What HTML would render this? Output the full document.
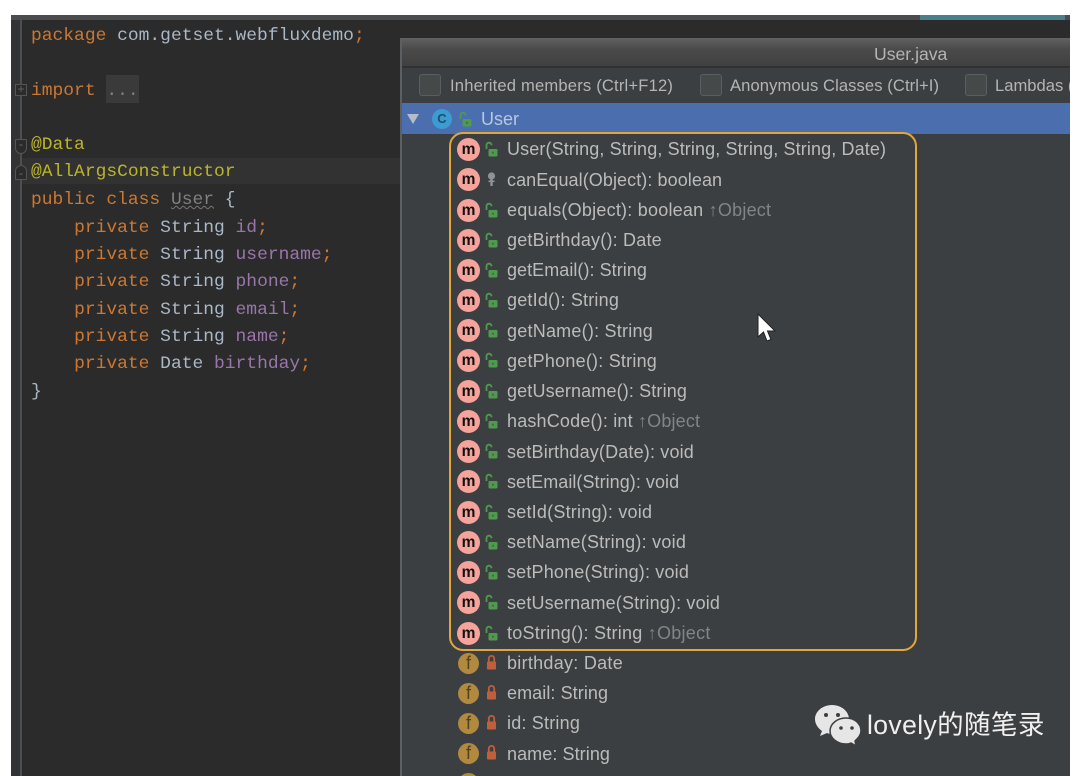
<!DOCTYPE html>
<html><head><meta charset="utf-8">
<style>
html,body{margin:0;padding:0;width:1080px;height:776px;overflow:hidden;background:#fff}
body{position:relative;font-family:"Liberation Sans","Noto Sans CJK SC",sans-serif}
#w{position:absolute;left:0;top:0;width:1080px;height:776px;overflow:hidden;filter:blur(.35px)}
.a{position:absolute}
#ed{left:11px;top:15px;width:1059px;height:761px;background:#2b2b2b}
.c{position:absolute;left:31px;font:17.95px/27px "Liberation Mono",monospace;color:#a9b7c6;white-space:pre;height:27px}
.k{color:#cc7832}.v{color:#9876aa}.n{color:#bbb529}.g{color:#808080}
.r{position:absolute;left:507px;height:30px;line-height:30px;font-size:18px;color:#bbbbbb;white-space:pre}
.r i{font-style:normal;color:#808588}
.m{position:absolute;left:457px;width:23px;height:23px;border-radius:50%;background:#f5a39b;color:#111;font:bold 15.5px/24px "Liberation Sans",sans-serif;text-align:center}
.f{position:absolute;left:458px;width:21px;height:21px;border-radius:50%;background:#b1893f;color:#55421d;font:18px/21px "Liberation Sans",sans-serif;text-align:center}
.l{position:absolute;left:484px;width:15px;height:17px}
.cb{position:absolute;top:74px;width:20px;height:20px;border:1.5px solid #5a5e60;border-radius:3px;background:#45494a}
.t{position:absolute;top:74px;height:24px;line-height:24px;font-size:16.6px;color:#b4b4b4;white-space:pre}
</style></head><body>
<svg width="0" height="0" style="position:absolute">
<symbol id="o" viewBox="0 0 15 17"><path d="M2.5 8V4.2A2.5 2.5 0 0 1 7.5 4.2" fill="none" stroke="#4f9a4f" stroke-width="1.8"/><rect x="4.5" y="8" width="9" height="7.5" rx="1.2" fill="#4f9a4f"/><rect x="8" y="10.8" width="2" height="1.8" fill="#3c6f40"/></symbol>
<symbol id="p" viewBox="0 0 15 17"><path d="M4.8 8V4.6a2.7 2.7 0 0 1 5.4 0V8" fill="none" stroke="#c0603a" stroke-width="1.8"/><rect x="3" y="7.5" width="9" height="8" rx="1" fill="#c0603a"/></symbol>
<symbol id="y" viewBox="0 0 15 17"><circle cx="7.5" cy="5" r="3.6" fill="#8f9396"/><rect x="6.3" y="6" width="2.4" height="9" fill="#8f9396"/><rect x="4.5" y="9.5" width="6" height="1.6" fill="#8f9396"/></symbol>
</svg>
<div id="w">
<div class="a" id="ed"></div>
<div class="a" style="left:11px;top:20px;width:9px;height:756px;background:#313335"></div>
<div class="a" style="left:11px;top:15px;width:1059px;height:5px;background:#4a4c4e"></div>
<div class="a" style="left:920px;top:15px;width:145px;height:5px;background:#4b7f8a"></div>
<div class="a" style="left:20px;top:20px;width:2px;height:756px;background:#4c4e50"></div>
<div class="a" style="left:22px;top:158px;width:379px;height:26px;background:#323232"></div>

<div class="a" style="left:15px;top:84px;width:12px;height:12px;border:1px solid #555;box-sizing:border-box;color:#666;background:#2b2b2b;font:12px/10px 'Liberation Mono',monospace;text-align:center">+</div>
<div class="a" style="left:15px;top:139px;width:12px;height:15px;border:1px solid #555;border-radius:1px 1px 6px 6px;box-sizing:border-box;background:#2b2b2b;color:#666;font:12px/10px 'Liberation Mono',monospace;text-align:center">-</div>
<div class="a" style="left:15px;top:165px;width:12px;height:15px;border:1px solid #555;border-radius:6px 6px 1px 1px;box-sizing:border-box;background:#2b2b2b;color:#666;font:12px/16px 'Liberation Mono',monospace;text-align:center">-</div>

<div class="c" style="top:23px"><span class="k">package</span> com.getset.webfluxdemo<span class="k">;</span></div>
<div class="a" style="left:106px;top:75px;width:33px;height:28px;background:#3a3a3a"></div>
<div class="c" style="top:78px"><span class="k">import</span> <span class="g">...</span></div>
<div class="c" style="top:132px"><span class="n">@Data</span></div>
<div class="c" style="top:159px"><span class="n">@AllArgsConstructor</span></div>
<div class="c" style="top:187px"><span class="k">public class</span> <span class="g" style="text-decoration:underline wavy #777 1px">User</span> {</div>
<div class="c" style="top:215px">    <span class="k">private</span> String <span class="v">id</span><span class="k">;</span></div>
<div class="c" style="top:242px">    <span class="k">private</span> String <span class="v">username</span><span class="k">;</span></div>
<div class="c" style="top:269px">    <span class="k">private</span> String <span class="v">phone</span><span class="k">;</span></div>
<div class="c" style="top:297px">    <span class="k">private</span> String <span class="v">email</span><span class="k">;</span></div>
<div class="c" style="top:324px">    <span class="k">private</span> String <span class="v">name</span><span class="k">;</span></div>
<div class="c" style="top:351px">    <span class="k">private</span> Date <span class="v">birthday</span><span class="k">;</span></div>
<div class="c" style="top:379px">}</div>

<div class="a" style="left:400px;top:38px;width:670px;height:738px;background:#3c3f41;border-left:2px solid #5c6063;box-sizing:border-box"></div>
<div class="a" style="left:402px;top:38px;width:668px;height:28px;background:linear-gradient(#626262,#4a4a4a 40%,#404040)"></div>
<div class="a" style="left:402px;top:66px;width:668px;height:2px;background:#2f3133"></div>
<div class="a" style="left:874px;top:42px;height:24px;line-height:24px;font-size:17.6px;color:#b4b4b4">User.java</div>

<div class="cb" style="left:419px"></div><div class="t" style="left:450px;letter-spacing:.18px">Inherited members (Ctrl+F12)</div>
<div class="cb" style="left:700px"></div><div class="t" style="left:730px;letter-spacing:.08px">Anonymous Classes (Ctrl+I)</div>
<div class="cb" style="left:965px"></div><div class="t" style="left:995px;width:75px;overflow:hidden">Lambdas (</div>

<div class="a" style="left:402px;top:103px;width:668px;height:31px;background:#4b6eaf"></div>
<svg class="a" style="left:406px;top:113px" width="14" height="12"><path d="M1 1H13L7 11Z" fill="#b5bcc6"/></svg>
<div class="a" style="left:432px;top:109px;width:20px;height:20px;border-radius:50%;background:#3c9bd0;color:#1c4f70;font:bold 13px/20px 'Liberation Sans',sans-serif;text-align:center">C</div>
<svg class="a" style="left:458px;top:111px" width="15" height="17"><use href="#o"/></svg>
<div class="r" style="top:104px;left:481px;color:#b9c6e0">User</div>

<div class="m" style="top:138px">m</div><svg class="l" style="top:141px"><use href="#o"/></svg><div class="r" style="top:134px;letter-spacing:.12px">User(String, String, String, String, String, Date)</div>
<div class="m" style="top:168px">m</div><svg class="l" style="top:171px"><use href="#y"/></svg><div class="r" style="top:165px;letter-spacing:.08px">canEqual(Object): boolean</div>
<div class="m" style="top:199px">m</div><svg class="l" style="top:202px"><use href="#o"/></svg><div class="r" style="top:195px;letter-spacing:.23px">equals(Object): boolean <i>↑Object</i></div>
<div class="m" style="top:229px">m</div><svg class="l" style="top:232px"><use href="#o"/></svg><div class="r" style="top:225px;letter-spacing:.2px">getBirthday(): Date</div>
<div class="m" style="top:259px">m</div><svg class="l" style="top:262px"><use href="#o"/></svg><div class="r" style="top:255px;letter-spacing:.05px">getEmail(): String</div>
<div class="m" style="top:289px">m</div><svg class="l" style="top:292px"><use href="#o"/></svg><div class="r" style="top:285px;letter-spacing:.2px">getId(): String</div>
<div class="m" style="top:319px">m</div><svg class="l" style="top:322px"><use href="#o"/></svg><div class="r" style="top:316px;letter-spacing:.23px">getName(): String</div>
<div class="m" style="top:349px">m</div><svg class="l" style="top:352px"><use href="#o"/></svg><div class="r" style="top:346px;letter-spacing:.22px">getPhone(): String</div>
<div class="m" style="top:380px">m</div><svg class="l" style="top:383px"><use href="#o"/></svg><div class="r" style="top:376px;letter-spacing:.14px">getUsername(): String</div>
<div class="m" style="top:410px">m</div><svg class="l" style="top:413px"><use href="#o"/></svg><div class="r" style="top:406px;letter-spacing:.18px">hashCode(): int <i>↑Object</i></div>
<div class="m" style="top:440px">m</div><svg class="l" style="top:443px"><use href="#o"/></svg><div class="r" style="top:437px;letter-spacing:.17px">setBirthday(Date): void</div>
<div class="m" style="top:470px">m</div><svg class="l" style="top:473px"><use href="#o"/></svg><div class="r" style="top:467px;letter-spacing:.05px">setEmail(String): void</div>
<div class="m" style="top:501px">m</div><svg class="l" style="top:504px"><use href="#o"/></svg><div class="r" style="top:497px;letter-spacing:.22px">setId(String): void</div>
<div class="m" style="top:531px">m</div><svg class="l" style="top:534px"><use href="#o"/></svg><div class="r" style="top:527px;letter-spacing:.24px">setName(String): void</div>
<div class="m" style="top:561px">m</div><svg class="l" style="top:564px"><use href="#o"/></svg><div class="r" style="top:557px;letter-spacing:.18px">setPhone(String): void</div>
<div class="m" style="top:591px">m</div><svg class="l" style="top:594px"><use href="#o"/></svg><div class="r" style="top:588px;letter-spacing:.16px">setUsername(String): void</div>
<div class="m" style="top:622px">m</div><svg class="l" style="top:625px"><use href="#o"/></svg><div class="r" style="top:618px;letter-spacing:.25px">toString(): String <i>↑Object</i></div>

<div class="f" style="top:653px">f</div><svg class="l" style="top:654px"><use href="#p"/></svg><div class="r" style="top:648px;letter-spacing:.28px">birthday: Date</div>
<div class="f" style="top:683px">f</div><svg class="l" style="top:684px"><use href="#p"/></svg><div class="r" style="top:678px;letter-spacing:.08px">email: String</div>
<div class="f" style="top:713px">f</div><svg class="l" style="top:714px"><use href="#p"/></svg><div class="r" style="top:708px;letter-spacing:.2px">id: String</div>
<div class="f" style="top:743px">f</div><svg class="l" style="top:744px"><use href="#p"/></svg><div class="r" style="top:739px;letter-spacing:.08px">name: String</div>
<div class="f" style="top:773px"></div>

<div class="a" style="left:449px;top:132px;width:468px;height:519px;border:2px solid #e3a63f;border-radius:14px;box-sizing:border-box"></div>

<svg class="a" style="left:756px;top:313px" width="22" height="30" viewBox="0 0 22 30"><path d="M2 1V24L7.5 19L11 28L15 26.5L11.5 18H19Z" fill="#fff" stroke="#222" stroke-width="1"/></svg>

<svg class="a" style="left:813px;top:704px" width="50" height="44" viewBox="0 0 50 44">
<path d="M19 1C9 1 2 8 2 15C2 20 5 24 9 27L7 32L14 29C16 30 18 30 20 30C28 30 36 24 36 15C36 8 29 1 19 1Z" fill="#e6e6e6"/>
<circle cx="13" cy="11" r="2" fill="#3c3f41"/><circle cx="25" cy="11" r="2" fill="#3c3f41"/>
<path d="M33 14C24 14 17 20 17 27C17 34 24 40 33 40C35 40 36 40 38 39L43 42L42 37C45 34 48 31 48 27C48 20 42 14 33 14Z" fill="#e6e6e6" stroke="#3c3f41" stroke-width="1.5"/>
<circle cx="28" cy="24" r="1.8" fill="#3c3f41"/><circle cx="39" cy="24" r="1.8" fill="#3c3f41"/>
</svg>
<div class="a" style="left:867px;top:708px;height:34px;line-height:34px;font-size:26.5px;letter-spacing:.4px;color:#f0f0f0;font-family:'Liberation Sans','Noto Sans CJK SC',sans-serif;white-space:pre">lovely的随笔录</div>
</div>
</body></html>
